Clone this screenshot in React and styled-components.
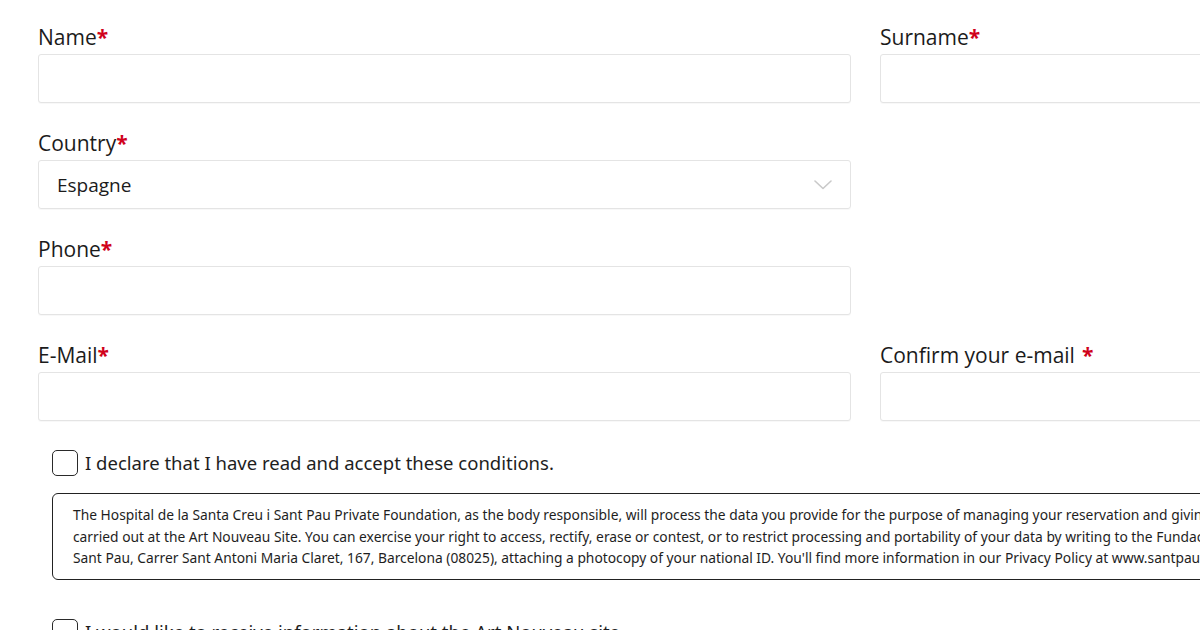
import React from "react";
import styled, {createGlobalStyle} from "styled-components";

const GlobalStyle = createGlobalStyle`
  html, body {
    margin: 0;
    padding: 0;
    background: #fff;
    overflow: hidden;
  }
  body {
    font-family: "Open Sans", "Noto Sans", sans-serif;
    color: #1b1b1b;
  }
`;

const Form = styled.form`
  width: 1693px;
  padding: 26px 0 0 38px;
  box-sizing: border-box;
`;

const Grid = styled.div`
  display: grid;
  grid-template-columns: 813px 813px;
  column-gap: 29px;
  row-gap: 29px;
`;

const Field = styled.div`
  display: flex;
  flex-direction: column;
  gap: 6px;
`;

const Label = styled.label`
  font-size: 21px;
  line-height: 22px;
  color: #1b1b1b;
`;

const Required = styled.span`
  color: #d0021b;
  font-weight: 700;
  margin-left: ${props => props.spaced ? "7px" : "0"};
`;

const Input = styled.input`
  height: 49px;
  box-sizing: border-box;
  border: 1px solid #e4e4e4;
  border-radius: 3px;
  box-shadow: 0 1px 1px rgba(0, 0, 0, 0.03);
  background: #fff;
  padding: 0 18px;
  font: inherit;
  font-size: 19px;
  outline: none;
`;

const SelectBox = styled.div`
  height: 49px;
  box-sizing: border-box;
  border: 1px solid #e4e4e4;
  border-radius: 3px;
  box-shadow: 0 1px 1px rgba(0, 0, 0, 0.03);
  display: flex;
  align-items: center;
  justify-content: space-between;
  padding: 0 18px 0 18px;
  font-size: 19px;
  color: #1b1b1b;
`;

const Chevron = () => (
    <svg width="18" height="10" viewBox="0 0 18 10" fill="none">
        <path d="M1 1 L9 8.5 L17 1" stroke="#c9c9c9" strokeWidth="1.6" strokeLinecap="round" strokeLinejoin="round"/>
    </svg>
);

const Consent = styled.div`
  margin: 29px 0 0 14px;
  display: flex;
  flex-direction: column;
`;

const CheckRow = styled.label`
  display: flex;
  align-items: center;
  gap: 7px;
  font-family: "Noto Sans", "Open Sans", sans-serif;
  font-size: 18.5px;
  line-height: 26px;
  color: #1e1e1e;
`;

const Box = styled.span`
  width: 26px;
  height: 26px;
  box-sizing: border-box;
  border: 1.5px solid #2a2a2a;
  border-radius: 5px;
  flex: none;
`;

const Notice = styled.div`
  margin-top: 17px;
  width: 1700px;
  box-sizing: border-box;
  border: 1.5px solid #222;
  border-radius: 6px;
  padding: 10px 20px;
  font-family: "Noto Sans", "Open Sans", sans-serif;
  font-size: 13.8px;
  line-height: 21.7px;
  color: #1e1e1e;
`;

const NoticeLine = styled.div`
  white-space: nowrap;
`;

const NextCheck = styled(CheckRow)`
  margin-top: 39px;
`;

const fields = [
    {name: "Name", right: {name: "Surname"}},
    {name: "Country", select: "Espagne"},
    {name: "Phone"},
    {name: "E-Mail", right: {name: "Confirm your e-mail", spaced: true}},
];

const noticeLines = [
    "The Hospital de la Santa Creu i Sant Pau Private Foundation, as the body responsible, will process the data you provide for the purpose of managing your reservation and giving you access to the activities",
    "carried out at the Art Nouveau Site. You can exercise your right to access, rectify, erase or contest, or to restrict processing and portability of your data by writing to the Fundació Privada Hospital de la Santa Creu i",
    "Sant Pau, Carrer Sant Antoni Maria Claret, 167, Barcelona (08025), attaching a photocopy of your national ID. You'll find more information in our Privacy Policy at www.santpaubarcelona.org.",
];

function FormField({name, spaced, select}) {
    return (
        <Field>
            <Label>{name}<Required spaced={spaced}>*</Required></Label>
            {select
                ? <SelectBox>{select}<Chevron /></SelectBox>
                : <Input type="text" />}
        </Field>
    );
}

export default function App() {
    return (
        <>
            <GlobalStyle />
            <Form>
                <Grid>
                    {fields.map(row => (
                        <React.Fragment key={row.name}>
                            <FormField {...row} />
                            {row.right ? <FormField {...row.right} /> : <div />}
                        </React.Fragment>
                    ))}
                </Grid>
                <Consent>
                    <CheckRow><Box />I declare that I have read and accept these conditions.</CheckRow>
                    <Notice>
                        {noticeLines.map(line => <NoticeLine key={line}>{line}</NoticeLine>)}
                    </Notice>
                    <NextCheck><Box />I would like to receive information about the Art Nouveau site.</NextCheck>
                </Consent>
            </Form>
        </>
    );
}
